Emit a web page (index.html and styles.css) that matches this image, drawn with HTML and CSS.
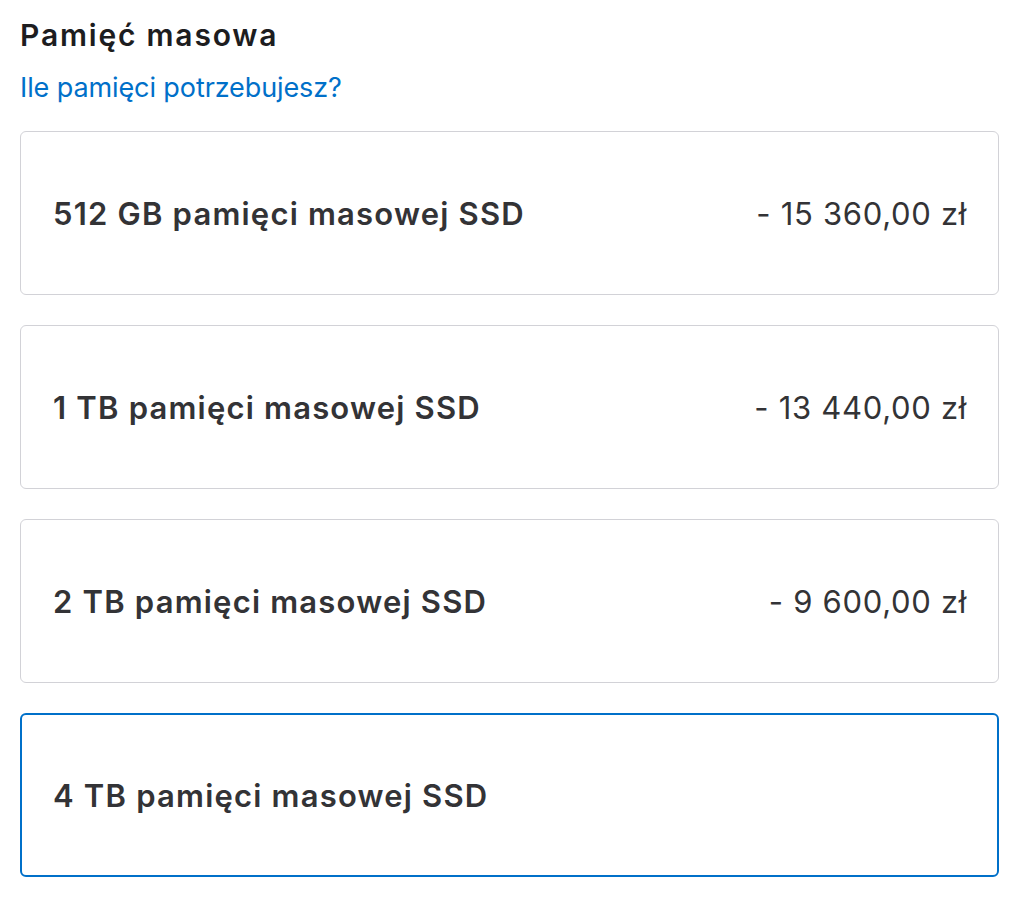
FILE: index.html
```html
<!DOCTYPE html>
<html lang="pl">
<head>
<meta charset="utf-8">
<title>Pamięć masowa</title>
<link rel="stylesheet" href="styles.css">
</head>
<body>
<section class="storage">
  <h2 class="title">Pamięć masowa</h2>
  <a class="help" href="#">Ile pamięci potrzebujesz?</a>
  <div class="options">
    <div class="option">
      <span class="label">512 GB pamięci masowej SSD</span>
      <span class="price">- 15 360,00 zł</span>
    </div>
    <div class="option">
      <span class="label">1 TB pamięci masowej SSD</span>
      <span class="price">- 13 440,00 zł</span>
    </div>
    <div class="option">
      <span class="label">2 TB pamięci masowej SSD</span>
      <span class="price">- 9 600,00 zł</span>
    </div>
    <div class="option selected">
      <span class="label">4 TB pamięci masowej SSD</span>
    </div>
  </div>
</section>
</body>
</html>
```
FILE: styles.css
```css
html, body {
  margin: 0;
  padding: 0;
  background: #fff;
}
body {
  font-family: Inter, "Noto Sans", "Liberation Sans", sans-serif;
  color: #333336;
}
.storage {
  width: 979px;
  padding: 17px 0 0 20px;
  display: flex;
  flex-direction: column;
}
.title {
  margin: 0;
  font-size: 30px;
  line-height: 36px;
  font-weight: 600;
  letter-spacing: 1.8px;
  color: #1d1d1f;
}
.help {
  margin-top: 19px;
  font-size: 27px;
  line-height: 32px;
  letter-spacing: -0.1px;
  color: #0070c9;
  text-decoration: none;
  align-self: flex-start;
}
.options {
  margin-top: 27px;
  display: flex;
  flex-direction: column;
  gap: 30px;
}
.option {
  box-sizing: border-box;
  height: 164px;
  border: 1px solid #d2d2d7;
  border-radius: 6px;
  display: flex;
  align-items: center;
  justify-content: space-between;
  padding: 0 31px 0 32px;
  font-size: 31px;
}
.option.selected {
  border: 2px solid #0070c9;
  padding: 0 30px 0 31px;
}
.label {
  font-weight: 600;
  letter-spacing: 1.2px;
}
.price {
  font-weight: 400;
  letter-spacing: 0.7px;
}
```
